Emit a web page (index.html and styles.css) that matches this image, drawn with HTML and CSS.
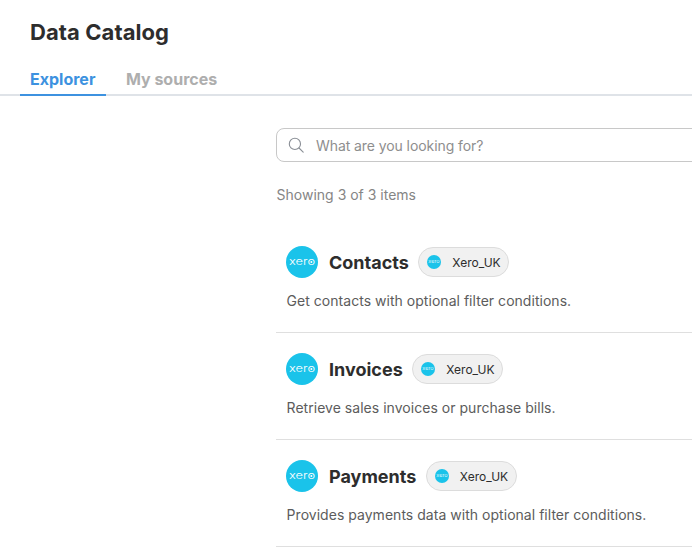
FILE: index.html
```html
<!DOCTYPE html>
<html lang="en">
<head>
<meta charset="utf-8">
<title>Data Catalog</title>
<link rel="stylesheet" href="styles.css">
</head>
<body>
<header class="header">
  <h1 class="title">Data Catalog</h1>
  <nav class="tabs">
    <a class="tab active">Explorer</a>
    <a class="tab">My sources</a>
  </nav>
</header>
<main class="main">
  <div class="search">
    <svg class="search-icon" viewBox="0 0 16 16" width="16" height="16" fill="none" stroke="#8a8f96" stroke-width="1.1"><circle cx="6.9" cy="6.9" r="5.6"/><path d="M11 11l4.2 4.2" stroke-linecap="round"/></svg>
    <span class="placeholder">What are you looking for?</span>
  </div>
  <p class="count">Showing 3 of 3 items</p>
  <ul class="list">
    <li class="item">
      <div class="item-head">
        <svg class="logo" viewBox="0 0 32 32" width="32" height="32"><circle cx="16" cy="16" r="16" fill="#1ac3ea"/><text x="16" y="19" text-anchor="middle" textLength="26" lengthAdjust="spacingAndGlyphs" class="logo-text">xero</text><circle cx="25.4" cy="16" r="1" fill="#fff"/></svg>
        <h2 class="name">Contacts</h2>
        <span class="chip"><svg class="chip-logo" viewBox="0 0 32 32" width="14" height="14"><circle cx="16" cy="16" r="16" fill="#1ac3ea"/><text x="16" y="19" text-anchor="middle" textLength="26" lengthAdjust="spacingAndGlyphs" class="logo-text">xero</text></svg>Xero_UK</span>
      </div>
      <p class="desc">Get contacts with optional filter conditions.</p>
    </li>
    <li class="item">
      <div class="item-head">
        <svg class="logo" viewBox="0 0 32 32" width="32" height="32"><circle cx="16" cy="16" r="16" fill="#1ac3ea"/><text x="16" y="19" text-anchor="middle" textLength="26" lengthAdjust="spacingAndGlyphs" class="logo-text">xero</text><circle cx="25.4" cy="16" r="1" fill="#fff"/></svg>
        <h2 class="name">Invoices</h2>
        <span class="chip"><svg class="chip-logo" viewBox="0 0 32 32" width="14" height="14"><circle cx="16" cy="16" r="16" fill="#1ac3ea"/><text x="16" y="19" text-anchor="middle" textLength="26" lengthAdjust="spacingAndGlyphs" class="logo-text">xero</text></svg>Xero_UK</span>
      </div>
      <p class="desc">Retrieve sales invoices or purchase bills.</p>
    </li>
    <li class="item">
      <div class="item-head">
        <svg class="logo" viewBox="0 0 32 32" width="32" height="32"><circle cx="16" cy="16" r="16" fill="#1ac3ea"/><text x="16" y="19" text-anchor="middle" textLength="26" lengthAdjust="spacingAndGlyphs" class="logo-text">xero</text><circle cx="25.4" cy="16" r="1" fill="#fff"/></svg>
        <h2 class="name">Payments</h2>
        <span class="chip"><svg class="chip-logo" viewBox="0 0 32 32" width="14" height="14"><circle cx="16" cy="16" r="16" fill="#1ac3ea"/><text x="16" y="19" text-anchor="middle" textLength="26" lengthAdjust="spacingAndGlyphs" class="logo-text">xero</text></svg>Xero_UK</span>
      </div>
      <p class="desc">Provides payments data with optional filter conditions.</p>
    </li>
  </ul>
</main>
</body>
</html>
```
FILE: styles.css
```css
* { box-sizing: border-box; }
html, body { margin: 0; padding: 0; overflow: hidden; }
body { width: 692px; height: 553px; background: #fff; font-family: Inter, "Liberation Sans", sans-serif; color: #2d2d2d; }
.header { padding-top: 18px; border-bottom: 2px solid #dfe3e8; height: 96px; }
.title { margin: 0 0 0 30px; font-size: 22px; line-height: 28px; font-weight: 700; letter-spacing: 0.08px; color: #2d2d2d; }
.tabs { display: flex; gap: 9.5px; margin-top: 10px; padding-left: 20px; }
.tab { height: 40px; padding: 13px 10px 0; font-size: 16px; line-height: 20px; font-weight: 700; color: #aeaeae; }
.tab.active { padding-right: 11px; color: #3d92e0; border-bottom: 2px solid #3d92e0; }
.main { margin-left: 276px; padding-top: 32px; width: 416px; overflow: hidden; }
.search { display: flex; align-items: center; width: 500px; height: 34px; border: 1px solid #c8c8c8; border-radius: 8px; padding-left: 11px; }
.search-icon { flex: none; margin-right: 12px; }
.placeholder { font-size: 14px; letter-spacing: -0.08px; color: #8e8e8e; }
.count { margin: 24px 0 0; padding-left: 0.6px; font-size: 14px; line-height: 18px; color: #858585; }
.list { list-style: none; margin: 22px 0 0; padding: 0; }
.item { height: 107px; padding: 20px 10px 0; border-bottom: 1px solid #dfdfdf; }
.item-head { display: flex; align-items: center; height: 32px; }
.logo { flex: none; margin-right: 11px; }
.logo-text { font-family: Inter, sans-serif; font-size: 10.5px; font-weight: 300; fill: #fff; }
.name { margin: 2px 9.5px 0 0; font-size: 18px; font-weight: 700; line-height: 24px; color: #2d2d2d; }
.chip { display: flex; align-items: center; height: 30px; padding: 0 7.5px 0 8px; background: #f1f1f1; border: 1px solid #dcdcdc; border-radius: 15px; font-size: 12px; color: #2d2d2d; }
.chip-logo { flex: none; margin-right: 11px; }
.desc { margin: 14px 0 0; padding-left: 0.6px; font-size: 14px; line-height: 18px; letter-spacing: 0.03px; color: #5c5c5c; }
```
